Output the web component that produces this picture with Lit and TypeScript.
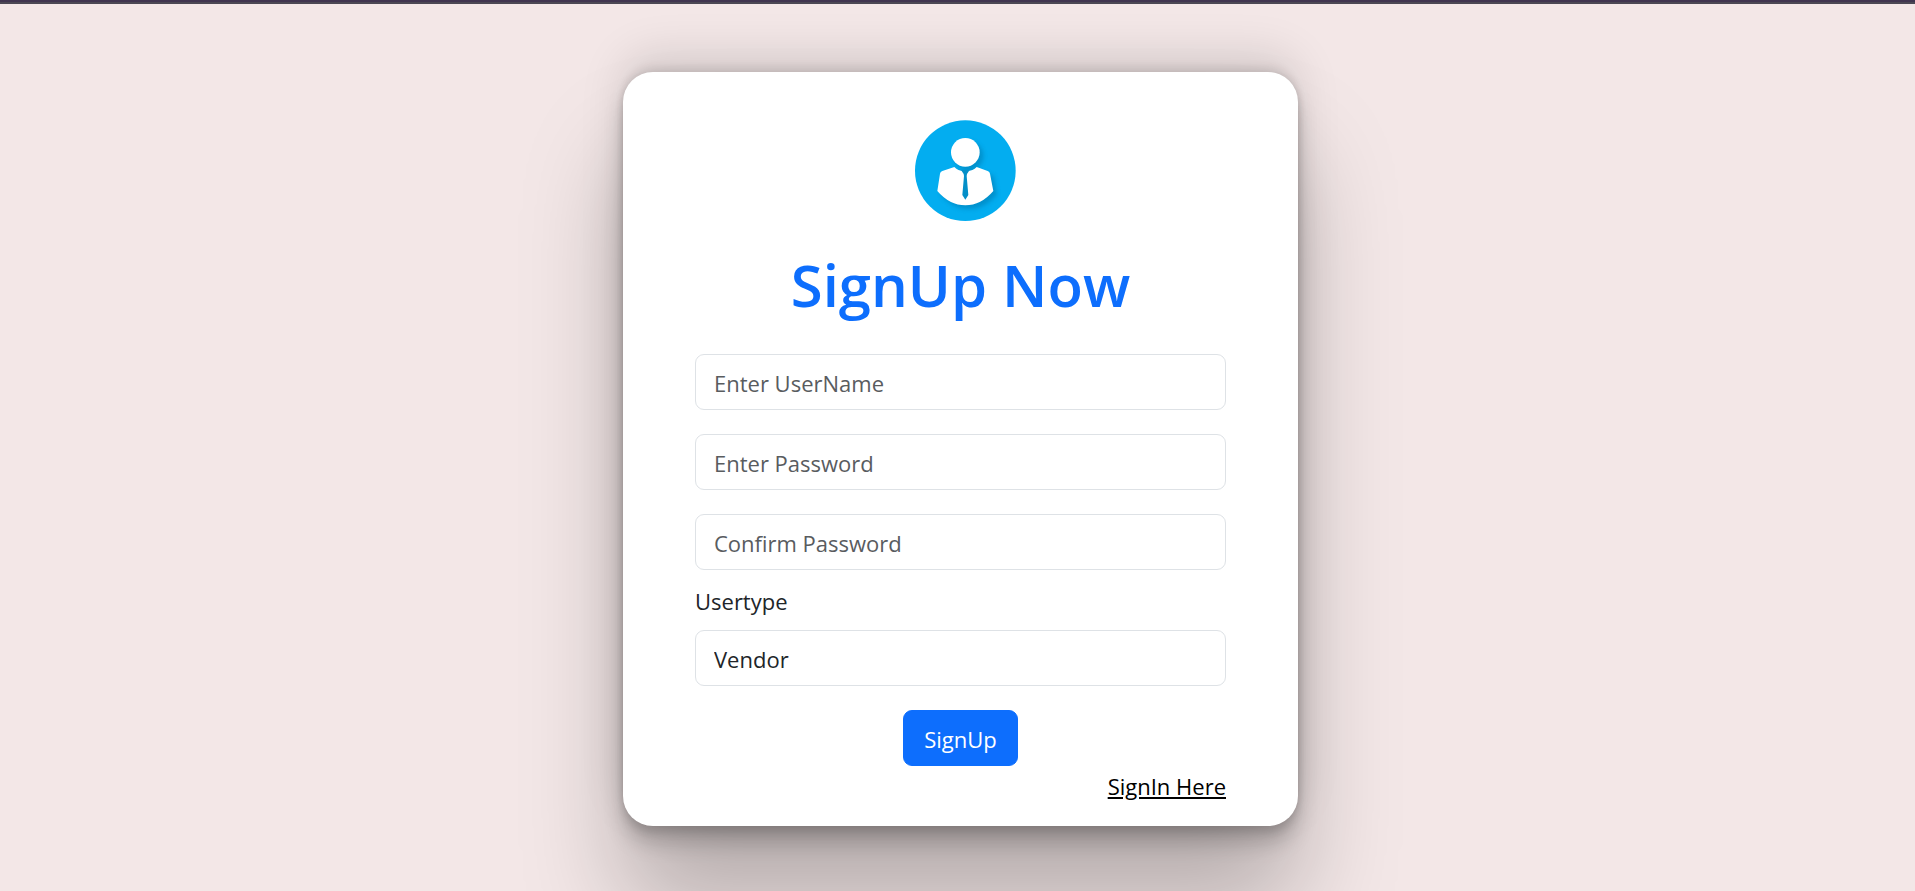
import { LitElement, html, css, svg } from "lit";
import { customElement, state } from "lit/decorators.js";

const avatar = svg`
  <defs>
    <filter id="soft" x="-20%" y="-20%" width="150%" height="150%">
      <feGaussianBlur stdDeviation="6" />
    </filter>
    <clipPath id="disc"><circle cx="195" cy="182" r="151" /></clipPath>
  </defs>
  <circle cx="195" cy="182" r="151" fill="#03adf0" />
  <g clip-path="url(#disc)">
    <g fill="#0482ba" opacity="0.65" filter="url(#soft)" transform="translate(11 11)">
      <circle cx="195" cy="127" r="43" />
      <path d="M162 172 L122 187 L111 243 Q148 286 195 286 Q242 286 279 243 L269 187 L229 172 Z" />
    </g>
  </g>
  <circle cx="195" cy="127" r="43" fill="#fff" />
  <path fill="#fff" d="M162 171 L168 176 Q174 181 182 182 L195 182 L208 182 Q217 181 223 176 L229 171 L262 183 Q268 185 269 191 L279 243 Q242 286 195 286 Q148 286 111 243 L119 191 Q120 185 126 183 Z" />
  <path fill="#048fc8" d="M182 180 L208 180 L200 192 L199 198 L204 255 L195 269 L186 255 L191 198 L190 192 Z" />
`;

@customElement("app-root")
export class AppRoot extends LitElement {
  @state() private userType = "Vendor";

  static styles = css`
    :host {
      display: block;
      box-sizing: border-box;
      min-height: 100vh;
      overflow: hidden;
      background: #f3e7e7;
      color: #212529;
      font-family: "Segoe UI", "Open Sans", "Noto Sans", sans-serif;
      font-size: 22px;
      line-height: 36px;
    }
    * {
      box-sizing: border-box;
    }
    .strip {
      height: 4px;
      background: #40354f;
      border-bottom: 2px solid #4b4753;
    }
    .page {
      padding: 68px 0 0 6px;
    }
    .card {
      display: flex;
      flex-direction: column;
      width: 100%;
      max-width: 675px;
      margin: 0 auto;
      padding: 24px 72px 20px;
      border-radius: 30px;
      background: #fff;
      box-shadow:
        0 81px 100px rgba(0, 0, 0, 0.25),
        0 -18px 45px rgba(0, 0, 0, 0.12),
        0 6px 9px rgba(0, 0, 0, 0.12),
        0 18px 20px rgba(0, 0, 0, 0.17),
        0 -5px 8px rgba(0, 0, 0, 0.09);
    }
    .avatar {
      align-self: center;
      width: 150px;
      height: 150px;
    }
    .title {
      margin: 0 0 30px;
      color: #0d6efd;
      font-size: 58px;
      font-weight: 600;
      line-height: 78px;
      text-align: center;
    }
    .field {
      width: 100%;
      height: 56px;
      margin: 0 0 24px;
      padding: 10px 18px 8px;
      border: 1px solid #dee2e6;
      border-radius: 9px;
      background: #fff;
      color: #212529;
      font: inherit;
      appearance: none;
    }
    .field::placeholder {
      color: #595c5f;
      opacity: 1;
    }
    .field.last {
      margin-bottom: 12px;
    }
    .label {
      margin-bottom: 10px;
      line-height: 38px;
    }
    .submit {
      align-self: center;
      height: 56px;
      padding: 10px 20px 8px;
      border: 1px solid #0d6efd;
      border-radius: 9px;
      background: #0d6efd;
      color: #fff;
      font: inherit;
      cursor: pointer;
    }
    .signin {
      align-self: flex-end;
      color: #000;
      line-height: 40px;
    }
  `;

  private onType(e: Event) {
    this.userType = (e.target as HTMLSelectElement).value;
  }

  render() {
    return html`
      <div class="strip"></div>
      <main class="page">
        <form class="card" @submit=${(e: Event) => e.preventDefault()}>
          <svg class="avatar" viewBox="-43 -42 450 450" aria-hidden="true">${avatar}</svg>
          <h1 class="title">SignUp Now</h1>
          <input class="field" type="text" aria-label="Enter UserName" placeholder="Enter UserName" />
          <input class="field" type="password" aria-label="Enter Password" placeholder="Enter Password" />
          <input class="field last" type="password" aria-label="Confirm Password" placeholder="Confirm Password" />
          <label class="label" for="usertype">Usertype</label>
          <select class="field" id="usertype" .value=${this.userType} @change=${this.onType}>
            <option>Vendor</option>
          </select>
          <button class="submit" type="submit">SignUp</button>
          <a class="signin" href="#">SignIn Here</a>
        </form>
      </main>
    `;
  }
}
